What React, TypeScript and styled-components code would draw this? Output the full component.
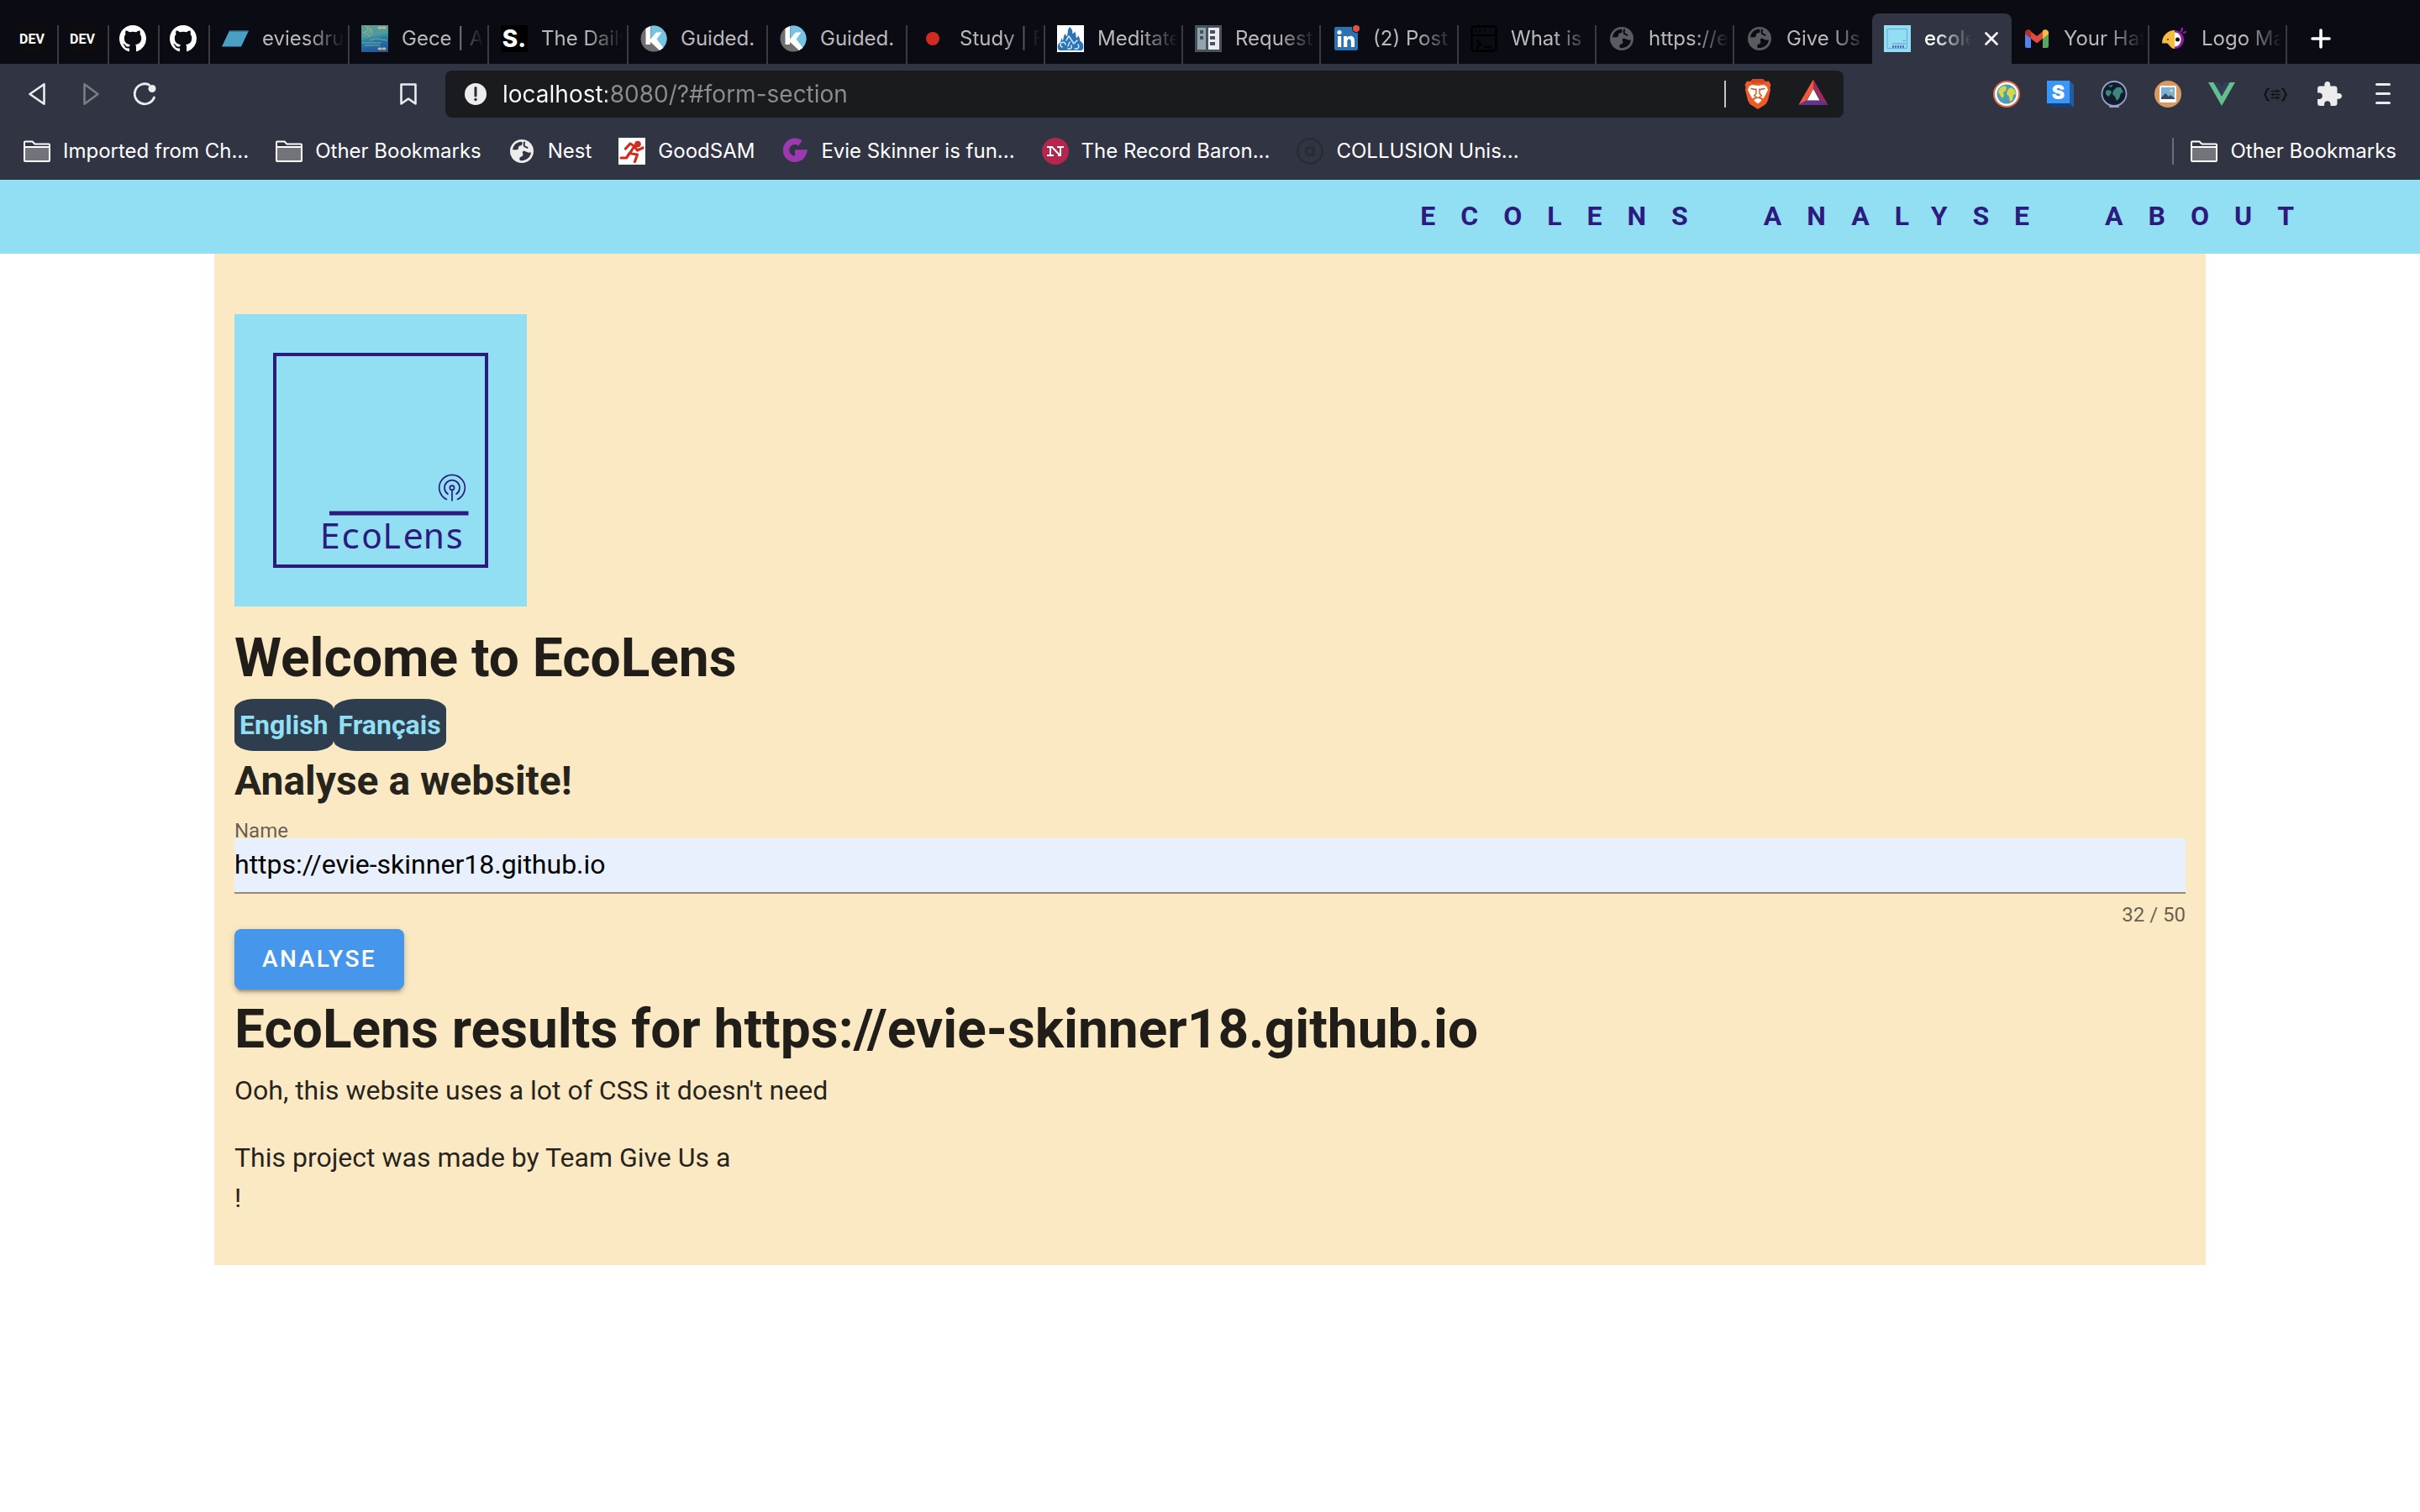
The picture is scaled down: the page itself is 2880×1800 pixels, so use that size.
import React, { useState } from "react";
import styled, { createGlobalStyle, css } from "styled-components";

const color = {
  tabStrip: "#0b0b14",
  chrome: "#313443",
  address: "#1a1b1f",
  icon: "#ececec",
  sky: "#92dff3",
  indigo: "#2c1a7f",
  sand: "#fbe9c4",
  slate: "#2f3e4e",
  blue: "#4696ec",
  field: "#e8effd",
  ink: "rgba(0, 0, 0, 0.87)",
  faint: "rgba(0, 0, 0, 0.6)",
};

const uiFont = `Inter, "Liberation Sans", sans-serif`;
const pageFont = `Roboto, "Liberation Sans", sans-serif`;

const GlobalStyle = createGlobalStyle`
  *, *::before, *::after { box-sizing: border-box; }
  body { margin: 0; background: #fff; font-family: ${pageFont}; font-size: 32px; line-height: 48px; color: ${color.ink}; }
  h1, h2, p { margin: 0; }
  button, input { font: inherit; color: inherit; border: 0; padding: 0; background: none; border-radius: 0; outline: none; }
  button { cursor: pointer; }
  a { color: inherit; text-decoration: none; }
  svg { display: block; flex: none; }
`;

/* ---------- browser window ---------- */

const Chrome = styled.header`
  font-family: ${uiFont};
  background: ${color.chrome};
  color: #fff;
`;

const TabStrip = styled.div`
  display: flex;
  align-items: flex-end;
  height: 76px;
  padding-left: 10px;
  background: ${color.tabStrip};
`;

const Tab = styled.button<{ $pinned?: boolean; $active?: boolean; $wide?: boolean; $rule?: boolean }>`
  position: relative;
  display: flex;
  align-items: center;
  gap: 16px;
  width: ${(p) => (p.$pinned ? 60 : p.$wide ? 166 : 164)}px;
  height: 60px;
  padding: 0 6px 0 ${(p) => (p.$pinned ? 12 : 14)}px;
  flex: none;
  text-align: left;
  font-size: 24px;
  line-height: 32px;
  color: #b9b9bb;
  ${(p) =>
    p.$rule &&
    css`
      &::after {
        content: "";
        position: absolute;
        right: 0;
        top: 14px;
        bottom: 0;
        width: 2px;
        background: #3b3b3e;
      }
    `}
  ${(p) =>
    p.$active &&
    css`
      background: ${color.chrome};
      border-radius: 8px 8px 0 0;
      color: #fff;
      font-weight: 500;
      padding-right: 16px;
    `}
`;

const TabTitle = styled.span<{ $fade: boolean }>`
  flex: 1;
  min-width: 0;
  overflow: hidden;
  white-space: nowrap;
  ${(p) => p.$fade && css`mask-image: linear-gradient(to right, #000 calc(100% - 44px), transparent);`}
`;

const NewTab = styled.button`
  width: 80px;
  height: 60px;
  display: grid;
  place-items: center;
`;

const Toolbar = styled.div`
  display: flex;
  align-items: center;
  height: 72px;
`;

const NavGroup = styled.div`
  display: flex;
  gap: 32px;
  width: 530px;
  padding: 0 28px;
  flex: none;
`;

const IconButton = styled.button<{ $push?: boolean }>`
  width: 32px;
  height: 32px;
  margin-left: ${(p) => (p.$push ? "auto" : "0")};
`;

const AddressBar = styled.form`
  flex: 1;
  display: flex;
  align-items: center;
  height: 56px;
  padding: 0 18px 0 20px;
  gap: 16px;
  border-radius: 8px;
  background: ${color.address};
`;

const AddressInput = styled.input`
  flex: 1;
  min-width: 0;
  height: 56px;
  font-size: 28px;
  line-height: 40px;
  background: linear-gradient(to right, #fff 124px, #8d8d8f 124px);
  background-clip: text;
  -webkit-background-clip: text;
  -webkit-text-fill-color: transparent;
`;

const Rule = styled.span<{ $bright?: boolean }>`
  width: 2px;
  height: 32px;
  background: ${(p) => (p.$bright ? "#c4c4c6" : "#6b6d77")};
`;

const AddressActions = styled.div`
  display: flex;
  gap: 30px;
  margin-left: 4px;
`;

const Extensions = styled.div`
  display: flex;
  gap: 32px;
  padding: 0 28px 0 178px;
`;

const Bookmarks = styled.nav`
  display: flex;
  align-items: center;
  gap: 32px;
  height: 66px;
  padding: 0 28px 2px;
`;

const Bookmark = styled.a`
  display: flex;
  align-items: center;
  gap: 15px;
  font-size: 24px;
  line-height: 32px;
  white-space: nowrap;
`;

const BookmarkEnd = styled.div`
  display: flex;
  align-items: center;
  gap: 20px;
  margin-left: auto;
`;

/* ---------- EcoLens page ---------- */

const SiteNav = styled.nav`
  display: flex;
  justify-content: flex-end;
  align-items: center;
  gap: 60px;
  height: 88px;
  padding: 0 120px 2px 0;
  background: ${color.sky};
`;

const SiteLink = styled.a`
  font-weight: 700;
  letter-spacing: 30px;
  text-transform: uppercase;
  color: ${color.indigo};
`;

const Container = styled.main`
  max-width: 2370px;
  margin: 0 auto;
  padding: 72px 24px 56px;
  background: ${color.sand};
`;

const Logo = styled.svg`
  margin-bottom: 14px;
`;

const Title = styled.h1`
  font-size: 64px;
  line-height: 96px;
`;

const Subtitle = styled.h2`
  font-size: 48px;
  line-height: 72px;
`;

const Languages = styled.div`
  display: flex;
`;

const LanguageButton = styled.button`
  height: 62px;
  padding: 0 6px;
  border-radius: 20%;
  background: ${color.slate};
  color: ${color.sky};
  font-weight: 700;
`;

const Field = styled.div`
  display: flex;
  flex-direction: column;
  padding-top: 14px;
`;

const FieldLabel = styled.label`
  font-size: 24px;
  line-height: 18px;
  color: ${color.faint};
`;

const FieldInput = styled.input`
  width: 100%;
  height: 66px;
  padding-bottom: 2px;
  background: ${color.field};
  border-bottom: 2px solid #938a78;
  color: #000;
`;

const Counter = styled.span`
  padding: 10px 0 2px;
  align-self: flex-end;
  font-size: 24px;
  line-height: 30px;
  color: ${color.faint};
`;

const AnalyseButton = styled.button`
  display: block;
  height: 72px;
  padding: 0 33px;
  border-radius: 8px;
  background: ${color.blue};
  color: #fff;
  font-size: 28px;
  font-weight: 500;
  letter-spacing: 0.09em;
  text-transform: uppercase;
  box-shadow: 0 6px 2px -4px rgba(0, 0, 0, 0.2), 0 4px 4px rgba(0, 0, 0, 0.14), 0 2px 10px rgba(0, 0, 0, 0.12);
`;

const Paragraph = styled.p`
  margin-bottom: 32px;
  &:last-child { margin-bottom: 0; }
`;

/* ---------- drawings, all in a 32 unit box ---------- */

const Icon = ({ children, box = "0 0 32 32" }: { children: React.ReactNode; box?: string }) => (
  <svg width="32" height="32" viewBox={box} aria-hidden="true">
    {children}
  </svg>
);

const stroke = (c: string, w: number) => ({
  fill: "none",
  stroke: c,
  strokeWidth: w,
  strokeLinecap: "round" as const,
  strokeLinejoin: "round" as const,
});

const DevIcon = () => (
  <Icon>
    <rect width="32" height="32" fill="#0d0d0d" />
    <text x="16" y="22" textAnchor="middle" fontFamily="'Liberation Sans Narrow', Roboto" fontWeight="700" fontSize="16" fill="#fff">DEV</text>
  </Icon>
);

const GitHubIcon = () => (
  <Icon box="0 0 16 16">
    <path fill="#fff" d="M8 0C3.58 0 0 3.58 0 8c0 3.54 2.29 6.53 5.47 7.59.4.07.55-.17.55-.38 0-.19-.01-.82-.01-1.49-2.01.37-2.53-.49-2.69-.94-.09-.23-.48-.94-.82-1.13-.28-.15-.68-.52-.01-.53.63-.01 1.08.58 1.23.82.72 1.21 1.87.87 2.33.66.07-.52.28-.87.51-1.07-1.78-.2-3.64-.89-3.64-3.95 0-.87.31-1.59.82-2.15-.08-.2-.36-1.02.08-2.12 0 0 .67-.21 2.2.82.64-.18 1.32-.27 2-.27s1.36.09 2 .27c1.53-1.04 2.2-.82 2.2-.82.44 1.1.16 1.92.08 2.12.51.56.82 1.27.82 2.15 0 3.07-1.87 3.75-3.65 3.95.29.25.54.73.54 1.48 0 1.07-.01 1.93-.01 2.2 0 .21.15.46.55.38A8.01 8.01 0 0 0 16 8c0-4.42-3.58-8-8-8z" />
  </Icon>
);

const SlantIcon = () => (
  <Icon>
    <path d="M9 6.500h23L23 25.500H0z" fill="#4a9fc4" />
    <path d="M9 6.500h23l-.5 1H8.500z" fill="#265b74" />
  </Icon>
);

const SeaIcon = () => (
  <Icon>
    <defs>
      <linearGradient id="sea" x1="0" y1="0" x2="0.2" y2="1">
        <stop offset="0" stopColor="#5a9f94" />
        <stop offset="0.45" stopColor="#4f9aa0" />
        <stop offset="0.6" stopColor="#2a7f9c" />
        <stop offset="1" stopColor="#2358a0" />
      </linearGradient>
    </defs>
    <rect width="32" height="32" fill="url(#sea)" />
    <path d="M5 1c4 2 4 7-3 8M8 2c4 3 3 8-3 9M11 4c3 3 2 8-3 9" {...stroke("#b8b27a", 1)} />
    <path d="M1 21h22M4 24h18M10 18l8-2 12 2" {...stroke("#6fb0ae", 1)} />
    <path d="M21 3h9M21 28h8" {...stroke("#c5b582", 3)} strokeDasharray="2 3" />
  </Icon>
);

const SkimmIcon = () => (
  <Icon>
    <rect width="32" height="32" />
    <text x="16" y="26" textAnchor="middle" fontFamily="Inter" fontWeight="800" fontSize="28" fill="#fff">S.</text>
  </Icon>
);

const GuidedIcon = () => (
  <Icon>
    <circle cx="16" cy="16" r="15.500" fill="#6f6f6f" />
    <path d="M12.500.9A15.500 15.500 0 0 1 27 27L18 15 12.500 20z" fill="#76c3e3" />
    <path d="M6.500 4L12 1v22H6.500z" fill="#fff" />
    <path d="M10.500 18.500L19 8.500h6.500l-6 8L27.500 27 23 30z" fill="#fff" />
  </Icon>
);

const DotIcon = () => (
  <Icon>
    <circle cx="16" cy="16" r="8" fill="#cf2c1f" />
  </Icon>
);

const FlameIcon = () => (
  <Icon>
    <rect width="32" height="32" fill="#fff" />
    <path d="M15 2c3 3 4 5 3 8 2-1 3-1 3-3 2 4 1 6 2 8 2-1 2-2 2-3 3 4 1 6 4 8 3 2 3 9 0 10H3c-3-1-3-7 0-9 2-1 1-4 3-6 0 2 0 3 1 3 1-2 0-5 3-8 0 2 1 3 2 3 1-4 0-7 3-11z" fill="#2a75ba" />
    <path d="M11 18l3-5 6 9 4-4M15 20l-2 5M6 26a3 3 0 1 1 4-3M13 28c3 1 5-1 4-4M21 28c4 1 6-2 4-5" {...stroke("#d7e6f4", 1.5)} />
  </Icon>
);

const RequestIcon = () => (
  <Icon>
    <rect width="32" height="32" fill="#47525a" />
    <path d="M3 3h10v26H3z" fill="#90a4b2" />
    <path d="M16 3h13v26H16z" fill="#e9ebf0" />
    <path d="M6 6h4v4H6zM6 13h4v4H6zM18 6h6v4h-6zM18 13h6v4h-6zM18 20h6v4h-6z" fill="#47525a" />
  </Icon>
);

const LinkedInIcon = () => (
  <Icon>
    <rect x="2" y="2" width="28" height="28" rx="2" fill="#2a72b0" />
    <circle cx="8" cy="8.500" r="2.600" fill="#fff" />
    <path d="M6 13h4.200v13H6zM13 13h4v2c2-3.500 9-3.500 9 3v8h-4.200v-7c0-3.500-4.500-3.500-4.500 0v7H13z" fill="#fff" />
    <circle cx="28" cy="4" r="5" fill="#0b0b14" />
    <circle cx="28" cy="4" r="4" fill="#e0533f" />
  </Icon>
);

const TerminalIcon = () => (
  <Icon>
    <rect x="1.500" y="1.500" width="29" height="29" rx="3" {...stroke("#000", 2.5)} />
    <path d="M2 12h28M8 19l4 4-4 4M17 26h7" {...stroke("#000", 2.5)} />
    <path d="M6 6.500h1M11 6.500h1M16 6.500h1" {...stroke("#000", 2)} />
  </Icon>
);

const GlobeIcon = ({ fill, water }: { fill: string; water: string }) => (
  <Icon>
    <circle cx="16" cy="16" r="14" fill={fill} />
    <path d="M5 14.500C5.500 9 10 5 15.500 4.800c1.500.5 1.500 2.500.5 3.700-1 1.200-3 .8-3.800 2-.7 1 .3 2-.7 3-1.500 1.500-4.500.5-6.500 1z" fill={water} />
    <path d="M27 17.500C26.300 23 22 27 15.500 27.200c-2-.2-2.500-1.500-2.200-3 .4-1.500 3.200-1.700 4-3.200.8-1.700-1.300-3-.3-4.500 1-1.500 3-.5 4.500.3 1.500.8 3.500 1 5.500.7z" fill={water} />
    <path d="M19 5.500c-.5 2-1 3.500.3 4.700 1.200 1 2.200.3 3.200 1.800" {...stroke(water, 2)} />
  </Icon>
);

const EcoFavicon = () => (
  <Icon>
    <rect width="32" height="32" fill={color.sky} />
    <rect x="4.500" y="4.500" width="23" height="23" {...stroke("#6aa6d6", 1)} />
    <path d="M10 22h16M23 18.500h2" {...stroke("#6d93cc", 1)} />
    <path d="M10 25.500h15" stroke="#4c5fae" strokeWidth="2.500" strokeDasharray="2 1" />
  </Icon>
);

const GmailIcon = () => (
  <Icon>
    <path d="M2 8v17a2 2 0 0 0 2 2h5V13z" fill="#4f86ec" />
    <path d="M30 8v17a2 2 0 0 1-2 2h-5V13z" fill="#58a55c" />
    <path d="M9 7.500l7 5.500 7-5.500V16l-7 5.500L9 16z" fill="#dd4b3e" />
    <path d="M2 9c0-4 4.500-5 7-2.500V16l-7-5.500z" fill="#b3312b" />
    <path d="M30 9c0-4-4.500-5-7-2.500V16l7-5.500z" fill="#f2bd42" />
  </Icon>
);

const ParrotIcon = () => (
  <Icon>
    <path d="M16 6a11 11 0 0 1 0 22z" fill="#8a1f9c" />
    <path d="M16 8.500c10 0 10 17 0 17z" fill="#fff" />
    <path d="M16 6v22c-5 0-6-5-9-6.500H1C1 12 8 6 16 6z" fill="#f4bd3f" />
    <circle cx="19.500" cy="17" r="2.500" fill="#111" />
    <circle cx="8" cy="17" r="1" fill="#333" />
    <path d="M24 7l1-3M27 9l2-1" {...stroke("#8a1f9c", 2.5)} />
  </Icon>
);

const BackIcon = ({ dim, flip }: { dim?: boolean; flip?: boolean }) => (
  <Icon>
    <path d={flip ? "M8.500 4.200v23.600L24.500 16z" : "M24.500 4.200v23.600L7.500 16z"} {...stroke(dim ? "#7a7c86" : color.icon, 2.6)} />
  </Icon>
);

const ReloadIcon = () => (
  <Icon>
    <path d="M21.500 5A12 12 0 1 0 27.500 20" {...stroke(color.icon, 2.8)} />
    <circle cx="25" cy="9.500" r="4.500" fill={color.icon} />
  </Icon>
);

const RibbonIcon = () => (
  <Icon>
    <path d="M7.500 4.500h17v23L16 21.500l-8.500 6z" {...stroke(color.icon, 2.6)} />
  </Icon>
);

const InfoIcon = () => (
  <Icon>
    <circle cx="16" cy="16" r="13" fill={color.icon} />
    <path d="M16 8.500v9.500" {...stroke("#2a2b30", 3)} />
    <circle cx="16" cy="22.500" r="1.700" fill="#2a2b30" />
  </Icon>
);

const BraveIcon = () => (
  <svg width="36" height="36" viewBox="0 0 36 36" aria-hidden="true">
    <path d="M12 0h12l3 3 4-.5 2.500 4.500-1 3 .5 3-3 12.500-2.500 4.500L18 36l-9.500-6L6 25.500 3 13l.5-3-1-3L5 2.500 9 3z" fill="#ec5b29" />
    <path d="M12 0h12l3 3-3 2.500-6-1-6 1L9 3z" fill="#d4491f" />
    <path d="M11 7l7 1 7-1 3.500 2 1.500 4-3 6-2.500 4.500L21 21.500l-3 1-3-1-3.500 2L9 19l-3-6 1.500-4z" fill="#fff" />
    <path d="M14 24.500l4-2 4 2 .5 1.500-4.500 3.500-4.500-3.500z" fill="#fff" />
    <path d="M10 11.500l5 1M26 11.500l-5 1M16 12v5.500l-2.500 2.500 4.500 2.500 4.500-2.500-2.500-2.500V12" {...stroke("#d4551f", 1.4)} />
  </svg>
);

const BatIcon = () => (
  <svg width="36" height="32" viewBox="0 0 36 32" aria-hidden="true">
    <path d="M18 .5V12L10 25.500.300 31z" fill="#f0593a" />
    <path d="M18 .5V12l8 13.500L35.700 31z" fill="#9a2c60" />
    <path d="M.3 31L10 25.500h16L35.700 31z" fill="#62348f" />
    <path d="M18 12l7.500 13.500h-15z" fill="#fff" />
  </svg>
);

const EarthExtension = () => (
  <Icon>
    <circle cx="16" cy="16" r="15" fill="#fff" stroke="#e0694a" strokeWidth="2" />
    <circle cx="16" cy="16" r="11.500" fill="#4d9db3" />
    <path d="M8 9l5-3 3 2-1 4-3 2 1 4-2 3-3-4-2-4zM18 10l4-2 4 4 1 4-3 1-1 6-3 2-1-6-3-3 1-4z" fill="#d3d94f" />
  </Icon>
);

const SExtension = () => (
  <Icon>
    <path d="M0 27h27l5 5H6z" fill="#173f73" />
    <path d="M27 0l5 5v27l-5-5z" fill="#225d9d" />
    <path d="M0 0h27v27H0z" fill="#3b97f7" />
    <text x="13.500" y="21.500" textAnchor="middle" fontFamily="Inter" fontWeight="900" fontSize="23" fill="#fff">S</text>
  </Icon>
);

const DarkEarthExtension = () => (
  <Icon>
    <circle cx="16" cy="15.500" r="14.500" fill="#131b2e" stroke="#93a2c6" strokeWidth="1.800" />
    <path d="M6 12l4-1 3 2-1 3-3 3-3-3zM15 12l4-4 5 0 3 6-3 1-2 6-3 3-2-5-3-3zM9 6l6-1-3 3z" fill="#3d867d" />
    <path d="M11 31h10" {...stroke("#93a2c6", 2)} />
  </Icon>
);

const PhotoExtension = () => (
  <Icon>
    <circle cx="16" cy="16" r="16" fill="#d79a63" />
    <rect x="6" y="6" width="20" height="20" rx="2" fill="#fff" />
    <rect x="8" y="8" width="16" height="14" fill="#7bb1d4" />
    <path d="M8 22v-2l5-5 4 4 2-2 5 4v1z" fill="#3d4a5e" />
    <circle cx="20" cy="12" r="1.800" fill="#f4d17b" />
  </Icon>
);

const VueExtension = () => (
  <Icon>
    <path d="M0 2h6.500L16 18.500 25.500 2H32L16 30z" fill="#63c08c" />
    <path d="M6.500 2h6L16 8l3.500-6h6L16 18.500z" fill="#323f5a" />
  </Icon>
);

const BracesExtension = () => (
  <Icon>
    <path d="M8 9.500c-4 0-2 6-5 7 3 1 1 7 5 7M24 9.500c4 0 2 6 5 7-3 1-1 7-5 7" {...stroke("#121318", 2.2)} />
    <path d="M11 12.500h10M11 16.500h10M11 20.500h10M18 11v3M13 15v3M18 19v3" {...stroke("#121318", 1.5)} />
  </Icon>
);

const PuzzleIcon = () => (
  <Icon box="0.5 0.2 23.2 23.2">
    <path fill={color.icon} d="M20.500 11H19V7c0-1.100-.9-2-2-2h-4V3.500C13 2.120 11.880 1 10.500 1S8 2.120 8 3.500V5H4c-1.100 0-1.990.9-1.990 2v3.800H3.500c1.490 0 2.700 1.210 2.700 2.700s-1.210 2.700-2.700 2.700H2V20c0 1.100.9 2 2 2h3.800v-1.500c0-1.490 1.210-2.700 2.700-2.700 1.490 0 2.700 1.210 2.700 2.700V22H17c1.100 0 2-.9 2-2v-4h1.500c1.380 0 2.500-1.120 2.500-2.500S21.880 11 20.500 11z" />
  </Icon>
);

const MenuIcon = () => (
  <Icon>
    <path d="M8.500 4.500h15M8.500 15.500h15M8.500 26.500h15" {...stroke(color.icon, 3)} />
  </Icon>
);

const FolderIcon = () => (
  <Icon>
    <path d="M1 11h30v16H1z" fill="#72747c" />
    <path d="M1 27V5.500a1 1 0 0 1 1-1h8.500l3 3H30a1 1 0 0 1 1 1V27a1 1 0 0 1-1 1H2a1 1 0 0 1-1-1zM1 11h30" {...stroke("#fff", 2)} />
  </Icon>
);

const RunnerIcon = () => (
  <Icon>
    <rect width="32" height="32" fill="#fff" />
    <circle cx="23" cy="7.500" r="3.800" fill="#cf2c1f" />
    <path d="M8.500 13l5.500-6 5 3-5.500 8.500 9 1.500-3 8.500M13.500 18l-4 6H3M19 10l3.500 5 6.500-3" {...stroke("#cf2c1f", 3.2)} />
  </Icon>
);

const PurpleGIcon = () => (
  <Icon>
    <path d="M22.500 6.500A10.500 10.500 0 1 0 26 18H16" fill="none" stroke="#9c38b0" strokeWidth="7.500" />
  </Icon>
);

const RecordIcon = () => (
  <Icon>
    <circle cx="16" cy="16" r="16" fill="#b5264f" />
    <path d="M6 11h6l9 9.500M10 11v9.500M6 21h8M18 11h8M22 11v10h-3" fill="none" stroke="#fff" strokeWidth="2" />
  </Icon>
);

const CollusionIcon = () => (
  <Icon>
    <circle cx="16" cy="16" r="14.800" {...stroke("#2b2c31", 2.4)} />
    <circle cx="15.500" cy="16" r="4.600" {...stroke("#2b2c31", 2.6)} />
    <path d="M20.500 11v10" {...stroke("#2b2c31", 2.6)} />
  </Icon>
);

const EcoLogo = () => (
  <Logo width="348" height="348" viewBox="0 0 348 348" role="img" aria-label="EcoLens logo">
    <rect width="348" height="348" fill={color.sky} />
    <rect x="48" y="48" width="252" height="252" fill="none" stroke={color.indigo} strokeWidth="4" />
    <path d="M113 237h165.500" stroke={color.indigo} strokeWidth="5" />
    <g fill="none" stroke={color.indigo} strokeWidth="1.700">
      <path d="M253 220.700a15.300 15.300 0 1 1 12 0M254.500 214.500a9 9 0 1 1 9 0M259 209.500v13" />
      <circle cx="259" cy="206.700" r="2.600" />
    </g>
    <text x="102" y="279" fontFamily="'Noto Sans Mono', 'DejaVu Sans Mono', monospace" fontSize="41" fill={color.indigo}>EcoLens</text>
  </Logo>
);

/* ---------- data ---------- */

type TabInfo = { title: string; icon: React.ReactNode; kind?: "pinned" | "wide" | "active" | "edge"; fits?: boolean };

const grayGlobe = <GlobeIcon fill="#5a5b60" water={color.tabStrip} />;

const tabs: TabInfo[] = [
  { title: "DEV Community", icon: <DevIcon />, kind: "pinned" },
  { title: "DEV Community", icon: <DevIcon />, kind: "pinned" },
  { title: "GitHub", icon: <GitHubIcon />, kind: "pinned" },
  { title: "GitHub", icon: <GitHubIcon />, kind: "pinned" },
  { title: "eviesdru", icon: <SlantIcon />, kind: "wide" },
  { title: "Gece | A", icon: <SeaIcon />, kind: "wide" },
  { title: "The Daily", icon: <SkimmIcon />, kind: "wide" },
  { title: "Guided.", icon: <GuidedIcon />, kind: "wide", fits: true },
  { title: "Guided.", icon: <GuidedIcon />, kind: "wide", fits: true },
  { title: "Study | F", icon: <DotIcon /> },
  { title: "Meditate", icon: <FlameIcon /> },
  { title: "Request", icon: <RequestIcon /> },
  { title: "(2) Post", icon: <LinkedInIcon /> },
  { title: "What is", icon: <TerminalIcon /> },
  { title: "https://e", icon: grayGlobe },
  { title: "Give Us", icon: grayGlobe, kind: "edge" },
  { title: "ecole", icon: <EcoFavicon />, kind: "active" },
  { title: "Your Hat", icon: <GmailIcon /> },
  { title: "Logo Ma", icon: <ParrotIcon /> },
];

const bookmarks = [
  { title: "Imported from Ch...", icon: <FolderIcon /> },
  { title: "Other Bookmarks", icon: <FolderIcon /> },
  { title: "Nest", icon: <GlobeIcon fill="#ececec" water={color.chrome} /> },
  { title: "GoodSAM", icon: <RunnerIcon /> },
  { title: "Evie Skinner is fun...", icon: <PurpleGIcon /> },
  { title: "The Record Baron...", icon: <RecordIcon /> },
  { title: "COLLUSION Unis...", icon: <CollusionIcon /> },
];

const extensions = [
  { name: "Earth", icon: <EarthExtension /> },
  { name: "Stylebot", icon: <SExtension /> },
  { name: "Dark Earth", icon: <DarkEarthExtension /> },
  { name: "Photos", icon: <PhotoExtension /> },
  { name: "Vue devtools", icon: <VueExtension /> },
  { name: "JSON", icon: <BracesExtension /> },
  { name: "Extensions", icon: <PuzzleIcon /> },
  { name: "Menu", icon: <MenuIcon /> },
];

const MAX_LENGTH = 50;

function BrowserChrome() {
  return (
    <Chrome>
      <TabStrip>
        {tabs.map((tab, i) => (
          <Tab
            key={i}
            type="button"
            aria-label={tab.title}
            $pinned={tab.kind === "pinned"}
            $wide={tab.kind === "wide" || tab.kind === "active"}
            $active={tab.kind === "active"}
            $rule={tab.kind !== "active" && tab.kind !== "edge"}
          >
            {tab.icon}
            {tab.kind !== "pinned" && <TabTitle $fade={!tab.fits}>{tab.title}</TabTitle>}
            {tab.kind === "active" && (
              <svg width="16" height="16" viewBox="0 0 16 16" aria-hidden="true">
                <path d="M1.500 1.500l13 13M14.500 1.500l-13 13" {...stroke("#fff", 2.6)} />
              </svg>
            )}
          </Tab>
        ))}
        <NewTab type="button" aria-label="New tab">
          <svg width="24" height="24" viewBox="0 0 24 24" aria-hidden="true">
            <path d="M12 2v20M2 12h20" {...stroke("#fff", 3.6)} />
          </svg>
        </NewTab>
      </TabStrip>
      <Toolbar>
        <NavGroup>
          <IconButton aria-label="Back"><BackIcon /></IconButton>
          <IconButton aria-label="Forward"><BackIcon dim flip /></IconButton>
          <IconButton aria-label="Reload"><ReloadIcon /></IconButton>
          <IconButton aria-label="Bookmark this page" $push><RibbonIcon /></IconButton>
        </NavGroup>
        <AddressBar onSubmit={(e) => e.preventDefault()}>
          <InfoIcon />
          <AddressInput aria-label="Address" defaultValue="localhost:8080/?#form-section" spellCheck={false} />
          <Rule $bright />
          <AddressActions>
            <BraveIcon />
            <BatIcon />
          </AddressActions>
        </AddressBar>
        <Extensions>
          {extensions.map((ext) => (
            <IconButton key={ext.name} aria-label={ext.name}>{ext.icon}</IconButton>
          ))}
        </Extensions>
      </Toolbar>
      <Bookmarks aria-label="Bookmarks">
        {bookmarks.map((b) => (
          <Bookmark key={b.title} href="#">{b.icon}{b.title}</Bookmark>
        ))}
        <BookmarkEnd>
          <Rule />
          <Bookmark href="#"><FolderIcon />Other Bookmarks</Bookmark>
        </BookmarkEnd>
      </Bookmarks>
    </Chrome>
  );
}

export default function App() {
  const [site, setSite] = useState("https://evie-skinner18.github.io");

  return (
    <>
      <GlobalStyle />
      <BrowserChrome />
      <SiteNav aria-label="EcoLens">
        <SiteLink href="#">EcoLens</SiteLink>
        <SiteLink href="#form-section">Analyse</SiteLink>
        <SiteLink href="#about">About</SiteLink>
      </SiteNav>
      <Container>
        <EcoLogo />
        <Title>Welcome to EcoLens</Title>
        <Languages>
          <LanguageButton type="button">English</LanguageButton>
          <LanguageButton type="button">Français</LanguageButton>
        </Languages>
        <Subtitle>Analyse a website!</Subtitle>
        <form id="form-section" onSubmit={(e) => e.preventDefault()}>
          <Field>
            <FieldLabel htmlFor="site">Name</FieldLabel>
            <FieldInput
              id="site"
              value={site}
              maxLength={MAX_LENGTH}
              spellCheck={false}
              onChange={(e) => setSite(e.target.value)}
            />
            <Counter>{site.length} / {MAX_LENGTH}</Counter>
          </Field>
          <AnalyseButton type="submit">Analyse</AnalyseButton>
        </form>
        <Title>EcoLens results for {site}</Title>
        <Paragraph>Ooh, this website uses a lot of CSS it doesn't need</Paragraph>
        <Paragraph>
          This project was made by Team Give Us a
          <br />!
        </Paragraph>
      </Container>
    </>
  );
}
